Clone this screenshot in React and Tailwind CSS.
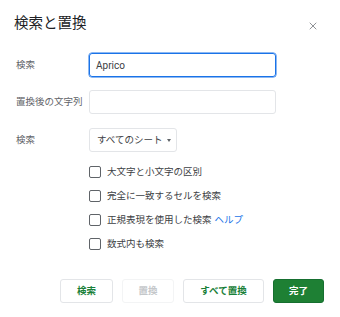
import { X } from 'lucide-react'

const OPTIONS = [
  { label: '大文字と小文字の区別' },
  { label: '完全に一致するセルを検索' },
  { label: '正規表現を使用した検索', help: 'ヘルプ' },
  { label: '数式内も検索' },
]

function Checkbox({ label, help }) {
  return (
    <div className="flex h-6 items-center">
      <span className="box-border h-3 w-3 rounded-[2px] border-[1.5px] border-[#5f6368]" />
      <span className="ml-[6px] text-[9.5px] text-[#3c4043]">{label}</span>
      {help ? <span className="ml-[3px] text-[9.5px] text-[#1a73e8]">{help}</span> : null}
    </div>
  )
}

export default function App() {
  return (
    <div
      className="relative h-[317px] w-[340px] bg-white"
      style={{ fontFamily: 'Roboto, "Noto Sans CJK JP", sans-serif' }}
    >
      <div className="flex h-5 items-center justify-between pl-[14px] pr-[21px] pt-[14px] box-content">
        <h1 className="text-[14.5px] leading-none text-[#202124]">検索と置換</h1>
        <X size={12} strokeWidth={1.4} className="mt-1 text-[#5f6368]" />
      </div>

      <div className="mt-[19px] flex items-center pl-4">
        <div className="w-[73px] text-[9.5px] text-[#5f6368]">検索</div>
        <div className="flex h-6 w-[187px] items-center rounded-[3px] border border-[#1a73e8] px-[6px] text-[10px] text-[#3c4043] shadow-[0_0_0_0.5px_#1a73e8]">
          Aprico
        </div>
      </div>

      <div className="mt-[13px] flex items-center pl-4">
        <div className="w-[73px] text-[9.5px] text-[#5f6368]">置換後の文字列</div>
        <div className="h-6 w-[187px] rounded-[3px] border border-[#e3e5e8]" />
      </div>

      <div className="mt-[14px] flex items-center pl-4">
        <div className="w-[73px] text-[9.5px] text-[#5f6368]">検索</div>
        <div className="flex h-6 w-[88px] items-center rounded-[3px] border border-[#e3e5e8] pl-[7px] text-[9.5px] text-[#3c4043]">
          すべてのシート
          <span className="ml-[5px] h-0 w-0 border-x-[2.5px] border-t-[3px] border-x-transparent border-t-[#5f6368]" />
        </div>
      </div>

      <div className="mt-2 flex flex-col pl-[89px]">
        {OPTIONS.map((o) => (
          <Checkbox key={o.label} label={o.label} help={o.help} />
        ))}
      </div>

      <div className="mt-[23px] flex justify-end gap-[9px] pr-4 text-[9.5px] font-bold">
        <button className="h-6 w-[53px] rounded-[3px] border border-[#e3e5e8] text-[#188038]">検索</button>
        <button className="h-6 w-[52px] rounded-[3px] border border-[#f3f4f5] text-[#c4c7ca]">置換</button>
        <button className="h-6 w-[81px] rounded-[3px] border border-[#e3e5e8] text-[#188038]">すべて置換</button>
        <button className="h-6 w-[51px] rounded-[3px] border border-[#166f30] bg-[#1e8034] text-white">完了</button>
      </div>
    </div>
  )
}
